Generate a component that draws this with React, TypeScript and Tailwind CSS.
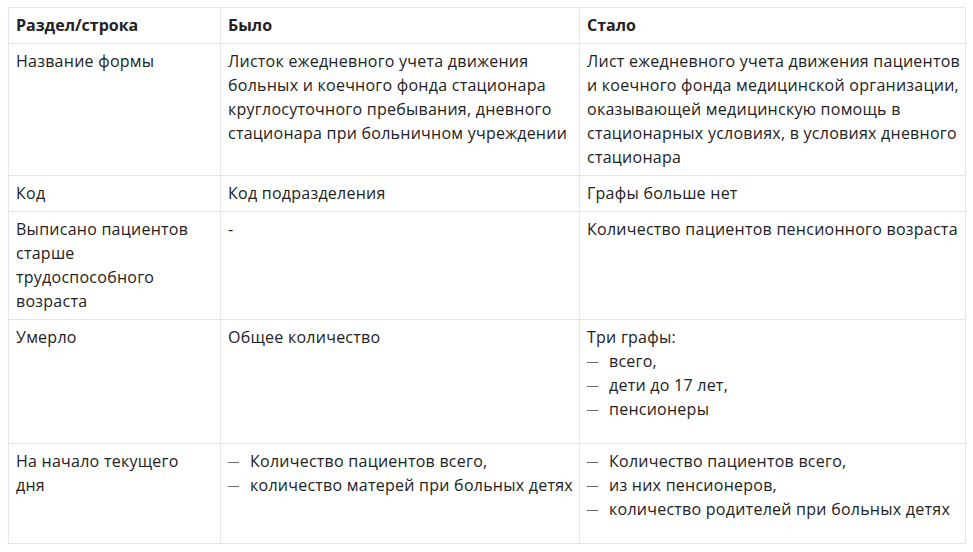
import React from 'react'

type Cell = { lines?: string[]; items?: string[] }

const rows: Cell[][] = [
  [
    { lines: ['Название формы'] },
    {
      lines: [
        'Листок ежедневного учета движения',
        'больных и коечного фонда стационара',
        'круглосуточного пребывания, дневного',
        'стационара при больничном учреждении',
      ],
    },
    {
      lines: [
        'Лист ежедневного учета движения пациентов',
        'и коечного фонда медицинской организации,',
        'оказывающей медицинскую помощь в',
        'стационарных условиях, в условиях дневного',
        'стационара',
      ],
    },
  ],
  [{ lines: ['Код'] }, { lines: ['Код подразделения'] }, { lines: ['Графы больше нет'] }],
  [
    { lines: ['Выписано пациентов', 'старше', 'трудоспособного', 'возраста'] },
    { lines: ['-'] },
    { lines: ['Количество пациентов пенсионного возраста'] },
  ],
  [
    { lines: ['Умерло'] },
    { lines: ['Общее количество'] },
    { lines: ['Три графы:'], items: ['всего,', 'дети до 17 лет,', 'пенсионеры'] },
  ],
  [
    { lines: ['На начало текущего', 'дня'] },
    { items: ['Количество пациентов всего,', 'количество матерей при больных детях'] },
    {
      items: [
        'Количество пациентов всего,',
        'из них пенсионеров,',
        'количество родителей при больных детях',
      ],
    },
  ],
]

function CellBody({ cell }: { cell: Cell }) {
  return (
    <>
      {cell.lines && (
        <p>
          {cell.lines.map((l) => (
            <span key={l} className="block whitespace-nowrap">
              {l}
            </span>
          ))}
        </p>
      )}
      {cell.items && (
        <ul className="mb-4">
          {cell.items.map((item) => (
            <li key={item} className="flex whitespace-nowrap">
              <span className="mt-[13px] mr-[11px] h-px w-[11px] shrink-0 bg-[#6b6b6b]" />
              <span>{item}</span>
            </li>
          ))}
        </ul>
      )}
    </>
  )
}

export default function App() {
  return (
    <div
      className="min-h-screen bg-white pt-[7px] pl-[8px] text-[16px] leading-[24px] text-[#222]"
      style={{ fontFamily: '"Open Sans", "Liberation Sans", sans-serif' }}
    >
      <table className="w-[958px] table-fixed border-collapse">
        <colgroup>
          <col className="w-[212px]" />
          <col className="w-[359px]" />
          <col />
        </colgroup>
        <thead>
          <tr>
            {['Раздел/строка', 'Было', 'Стало'].map((h) => (
              <th
                key={h}
                className="border border-[#e1e5ef] pt-[5px] pr-[7px] pb-[6px] pl-[7px] text-left align-top font-bold"
              >
                {h}
              </th>
            ))}
          </tr>
        </thead>
        <tbody>
          {rows.map((row, i) => (
            <tr key={i}>
              {row.map((cell, j) => (
                <td
                  key={j}
                  className="border border-[#e1e5ef] pt-[5px] pr-[7px] pb-[6px] pl-[7px] align-top tracking-[0.25px]"
                >
                  <CellBody cell={cell} />
                </td>
              ))}
            </tr>
          ))}
        </tbody>
      </table>
    </div>
  )
}
